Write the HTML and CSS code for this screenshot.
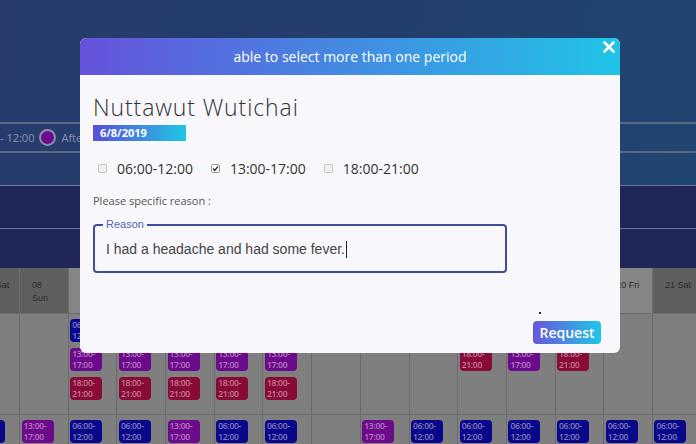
FILE: index.html
```html
<!DOCTYPE html>
<html>
<head>
<meta charset="utf-8">
<link rel="stylesheet" href="styles.css">
</head>
<body>
<div class="page">
  <div class="hero">
    <div class="legend">
      <span>- 12:00</span><span class="dot"></span><span>Afternoon 13:00 - 17:00</span>
    </div>
  </div>
  <div class="band"></div>
  <div class="band b2"></div>
  <div class="calendar">
    <div class="hcell we">07 Sat</div>
    <div class="hcell we">08<br>Sun</div>
    <div class="hcell">09 Mon</div>
    <div class="hcell">10 Tue</div>
    <div class="hcell">11 Wed</div>
    <div class="hcell">12 Thu</div>
    <div class="hcell">13 Fri</div>
    <div class="hcell we">14 Sat</div>
    <div class="hcell we">15 Sun</div>
    <div class="hcell">16 Mon</div>
    <div class="hcell">17 Tue</div>
    <div class="hcell">18 Wed</div>
    <div class="hcell">19 Thu</div>
    <div class="hcell">20 Fri</div>
    <div class="hcell we">21 Sat</div>

    <div class="cell"></div>
    <div class="cell"></div>
    <div class="cell"><div class="chip b">06:00-<br>12:00</div><div class="chip p">13:00-<br>17:00</div><div class="chip r">18:00-<br>21:00</div></div>
    <div class="cell"><div class="chip b">06:00-<br>12:00</div><div class="chip p">13:00-<br>17:00</div><div class="chip r">18:00-<br>21:00</div></div>
    <div class="cell"><div class="chip b">06:00-<br>12:00</div><div class="chip p">13:00-<br>17:00</div><div class="chip r">18:00-<br>21:00</div></div>
    <div class="cell"><div class="chip b">06:00-<br>12:00</div><div class="chip p">13:00-<br>17:00</div><div class="chip r">18:00-<br>21:00</div></div>
    <div class="cell"><div class="chip b">06:00-<br>12:00</div><div class="chip p">13:00-<br>17:00</div><div class="chip r">18:00-<br>21:00</div></div>
    <div class="cell"></div>
    <div class="cell"></div>
    <div class="cell"></div>
    <div class="cell"><div class="chip b">06:00-<br>12:00</div><div class="chip r">18:00-<br>21:00</div></div>
    <div class="cell"><div class="chip b">06:00-<br>12:00</div><div class="chip p">13:00-<br>17:00</div></div>
    <div class="cell"><div class="chip b">06:00-<br>12:00</div><div class="chip r">18:00-<br>21:00</div></div>
    <div class="cell"></div>
    <div class="cell"></div>

    <div class="cell"><div class="chip b">06:00-<br>12:00</div></div>
    <div class="cell"><div class="chip p">13:00-<br>17:00</div></div>
    <div class="cell"><div class="chip b">06:00-<br>12:00</div></div>
    <div class="cell"><div class="chip b">06:00-<br>12:00</div></div>
    <div class="cell"><div class="chip p">13:00-<br>17:00</div></div>
    <div class="cell"><div class="chip b">06:00-<br>12:00</div></div>
    <div class="cell"><div class="chip b">06:00-<br>12:00</div></div>
    <div class="cell"></div>
    <div class="cell"><div class="chip p">13:00-<br>17:00</div></div>
    <div class="cell"><div class="chip b">06:00-<br>12:00</div></div>
    <div class="cell"><div class="chip b">06:00-<br>12:00</div></div>
    <div class="cell"><div class="chip b">06:00-<br>12:00</div></div>
    <div class="cell"><div class="chip b">06:00-<br>12:00</div></div>
    <div class="cell"><div class="chip b">06:00-<br>12:00</div></div>
    <div class="cell"><div class="chip b">06:00-<br>12:00</div></div>
  </div>
</div>

<div class="modal">
  <div class="modal-head">
    <span>able to select more than one period</span>
    <svg class="close" width="12" height="12" viewBox="0 0 12 12"><path d="M1.5 1.5L10.5 10.5M10.5 1.5L1.5 10.5" stroke="#fff" stroke-width="2.6" stroke-linecap="round"/></svg>
  </div>
  <div class="modal-body">
    <h2 class="name">Nuttawut Wutichai</h2>
    <div class="date">6/8/2019</div>
    <div class="periods">
      <label class="period"><span class="box"></span>06:00-12:00</label>
      <label class="period"><span class="box on"><svg width="7" height="7" viewBox="0 0 7 7"><path d="M1 3.6L2.8 5.4L6 1.4" fill="none" stroke="#333" stroke-width="1.5"/></svg></span>13:00-17:00</label>
      <label class="period"><span class="box"></span>18:00-21:00</label>
    </div>
    <div class="hint">Please specific reason :</div>
    <fieldset class="reason">
      <legend>Reason</legend>
      <div class="text">I had a headache and had some fever.<span class="caret"></span></div>
    </fieldset>
    <div class="foot">
      <span class="spark"></span>
      <button class="btn">Request</button>
    </div>
  </div>
</div>
</body>
</html>
```

FILE: styles.css
```css
* { box-sizing: border-box; }
html, body { margin: 0; padding: 0; }
body {
  width: 696px;
  height: 444px;
  overflow: hidden;
  position: relative;
  font-family: "Open Sans", "Liberation Sans", sans-serif;
  background: #7f7f7f;
}
.page { display: flex; flex-direction: column; height: 444px; overflow: hidden; }
.page > * { flex: none; }
.hero {
  height: 185px;
  padding-top: 122px;
  background: linear-gradient(100deg, #273c6c 0%, #233d6c 50%, #1f4670 100%);
}
.legend {
  height: 31px;
  display: flex;
  align-items: center;
  gap: 5px;
  font-size: 11px;
  color: #8a93ab;
  border-top: 2px solid #5c6788;
  border-bottom: 2px solid #5c6788;
  white-space: nowrap;
}
.dot {
  width: 17px; height: 17px;
  border-radius: 50%;
  background: #6a0b8e;
  border: 2px solid #8e8ea6;
}
.band { height: 43px; background: #1f2757; border-top: 1px solid #6e7494; }
.band.b2 { height: 40px; }
.calendar {
  display: grid;
  grid-template-columns: repeat(15, 48.7px);
  grid-template-rows: 45px 101px 30px;
  margin-left: -28.7px;
  width: max-content;
}
.hcell {
  background: #868686;
  border-right: 1px solid #6e6e6e;
  font-family: "Liberation Sans", sans-serif;
  font-size: 9px;
  line-height: 13px;
  color: #2b2b2b;
  padding: 11px 0 0 12px;
  white-space: nowrap;
}
.hcell.we { background: #5f5f5f; }
.cell {
  background: #7f7f7f;
  border-right: 1px solid #6b6b6b;
  border-top: 1px solid #6b6b6b;
  display: flex;
  flex-direction: column;
  gap: 6px;
  padding: 5px 0 0 1.5px;
}
.chip {
  flex: none;
  width: 32px;
  height: 23px;
  border-radius: 4px;
  font-size: 8.5px;
  line-height: 10.5px;
  font-weight: 600;
  letter-spacing: -0.3px;
  padding: 1px 2px;
  color: rgba(255, 230, 240, 0.5);
  overflow: hidden;
}
.chip.b { background: #08088a; }
.chip.p { background: #6c0a8c; }
.chip.r { background: #880a36; }

.modal {
  position: absolute;
  left: 80px;
  top: 38px;
  width: 540px;
  height: 315px;
  background: #f8f8fc;
  border-radius: 6px;
  overflow: hidden;
  display: flex;
  flex-direction: column;
}
.modal-head {
  height: 37px;
  flex: none;
  position: relative;
  display: flex;
  align-items: center;
  justify-content: center;
  background: linear-gradient(90deg, #6652dc, #20c4e6);
  color: #fff;
  font-size: 14px;
  font-weight: 500;
}
.close { position: absolute; right: 5px; top: 3px; }
.modal-body {
  flex: 1;
  display: flex;
  flex-direction: column;
  padding: 19px 19px 9px 13px;
}
.name {
  margin: 0;
  font-size: 23px;
  line-height: 26px;
  font-weight: 300;
  letter-spacing: 0.9px;
  color: #333;
}
.date {
  width: 93px;
  height: 16px;
  margin-top: 5px;
  padding-left: 7px;
  background: linear-gradient(90deg, #5a4fd8, #1fc6e6);
  color: #fff;
  font-size: 11px;
  line-height: 16px;
  font-weight: 700;
}
.periods {
  display: flex;
  align-items: center;
  gap: 18px;
  height: 20px;
  margin-top: 17px;
  padding-left: 5px;
}
.period {
  display: flex;
  align-items: center;
  gap: 10px;
  font-size: 14px;
  color: #333;
}
.box {
  width: 9px; height: 9px;
  border: 1px solid #c4c4c4;
  border-radius: 2px;
  background: #f0f0f0;
  display: flex;
  align-items: center;
  justify-content: center;
}
.box.on { border-color: #999; background: #fff; }
.hint {
  margin-top: 16px;
  font-size: 11px;
  line-height: 14px;
  color: #555;
}
.reason {
  margin: 10px 0 0;
  width: 414px;
  border: 2px solid #3f4b9b;
  border-radius: 4px;
  padding: 9px 11px 13px;
  min-width: 0;
}
.reason legend {
  font-family: "Liberation Sans", sans-serif;
  font-size: 11px;
  line-height: 13px;
  color: #5664b0;
  padding: 0 3px;
  margin-left: -3px;
}
.text {
  font-family: "Liberation Sans", sans-serif;
  font-size: 14px;
  line-height: 18px;
  color: #444;
}
.caret {
  display: inline-block;
  width: 1px;
  height: 17px;
  background: #222;
  vertical-align: -4px;
  margin-left: 1px;
}
.foot {
  margin-top: auto;
  display: flex;
  flex-direction: column;
  align-items: flex-end;
}
.spark { width: 2px; height: 2px; background: #223; margin-right: 60px; }
.btn {
  margin-top: 7px;
  width: 68px;
  height: 23px;
  border: 0;
  border-radius: 4px;
  padding: 0;
  background: linear-gradient(90deg, #6a55dc, #1fc7e6);
  color: #fff;
  font-family: "Open Sans", sans-serif;
  font-size: 14px;
  font-weight: 600;
}
```
